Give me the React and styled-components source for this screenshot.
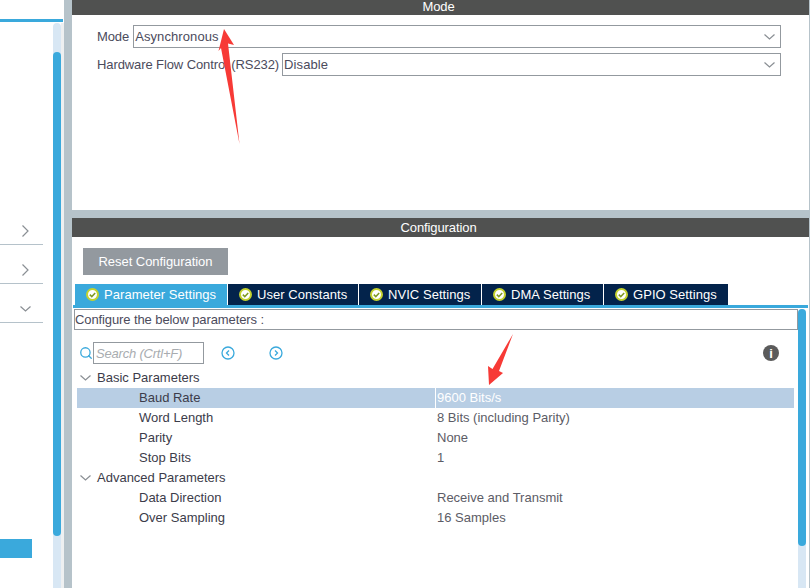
import styled, { createGlobalStyle } from "styled-components";
import { Search } from "lucide-react";

const GlobalStyle = createGlobalStyle`
    html, body {
        margin: 0;
        padding: 0;
        background: #fff;
        overflow: hidden;
    }
    body {
        font-family: "Liberation Sans", Arial, sans-serif;
        font-size: 13px;
        color: #4b4b5c;
    }
`

const Page = styled.div`
    position: relative;
    display: flex;
    width: 810px;
    height: 588px;
    overflow: hidden;
    background: #fff;
`

const Sidebar = styled.aside`
    flex: 0 0 64px;
    display: flex;
    flex-direction: column;
    background: #fff;
`

const SidebarRule = styled.div`
    height: 3px;
    margin: 19px 1px 0 0;
    background: #3aa9dc;
`

const SidebarBody = styled.div`
    flex: 1;
    display: flex;
    padding-top: 1px;
`

const SidebarList = styled.div`
    flex: 0 0 53px;
    display: flex;
    flex-direction: column;
    padding-top: 184px;
`

const SidebarRow = styled.div`
    height: 38px;
    width: 43px;
    margin-bottom: 1px;
    display: flex;
    align-items: center;
    justify-content: center;
    padding: 10px 0 0 7px;
    box-sizing: border-box;
    border-bottom: 1px solid #b5c2ca;
`

const SidebarBlock = styled.div`
    width: 32px;
    height: 19px;
    margin-top: 215px;
    background: #3aa9dc;
`

const SidebarGutter = styled.div`
    flex: 0 0 3px;
    background: #eef0f1;
`

const ScrollTrack = styled.div`
    width: 8px;
    flex: 0 0 8px;
    background: #d8e7f4;
    border-radius: 4px 4px 0 0;
    padding-top: ${p => p.$top}px;
    box-sizing: border-box;
`

const ScrollThumb = styled.div`
    height: ${p => p.$height}px;
    background: #3aa9dc;
    border-radius: 4px;
`

const Splitter = styled.div`
    flex: 0 0 8px;
    background: #b6c3ca;
`

const Main = styled.main`
    flex: 1;
    display: flex;
    flex-direction: column;
    min-width: 0;
    border-right: 1px solid #b6c3ca;
`

const SectionHeader = styled.div`
    height: ${p => p.$height}px;
    padding-right: 4px;
    padding-bottom: ${p => p.$lift || 0}px;
    box-sizing: border-box;
    background: #505150;
    color: #fff;
    display: flex;
    align-items: ${p => p.$align || "center"};
    justify-content: center;
    line-height: 13px;
    letter-spacing: -0.1px;
`

const ModePanel = styled.section`
    flex: 0 0 195px;
    display: flex;
    flex-direction: column;
    gap: 5px;
    padding: 10px 28px 0 25px;
    box-sizing: border-box;
    background: #fff;
`

const ModeRow = styled.div`
    display: flex;
    align-items: center;
    gap: ${p => p.$gap}px;
`

const ModeLabel = styled.label`
    white-space: nowrap;
    letter-spacing: -0.1px;
`

const SelectBox = styled.div`
    flex: 1;
    height: 23px;
    display: flex;
    align-items: center;
    justify-content: space-between;
    padding: 0 5px 0 1px;
    box-sizing: border-box;
    border: 1px solid #93999f;
    letter-spacing: 0.1px;
`

const PanelGap = styled.div`
    flex: 0 0 8px;
    background: #b6c3ca;
`

const ConfigPanel = styled.section`
    flex: 1;
    display: flex;
    flex-direction: column;
    min-height: 0;
`

const ResetButton = styled.button`
    align-self: flex-start;
    width: 145px;
    height: 27px;
    margin: 11px 0 9px 11px;
    padding: 0;
    border: 0;
    background: #93999f;
    color: #fff;
    font: inherit;
    letter-spacing: -0.05px;
`

const TabBar = styled.div`
    display: flex;
    height: 21px;
    padding-left: 3px;
`

const Tab = styled.div`
    width: ${p => p.$width}px;
    display: flex;
    align-items: center;
    gap: 5px;
    padding-left: 11px;
    box-sizing: border-box;
    margin-right: 1px;
    color: #fff;
    background: ${p => (p.$active ? "#3aa9dc" : "#03234b")};
    letter-spacing: 0.05px;
    white-space: nowrap;
`

const TabRule = styled.div`
    height: 3px;
    margin: 0 1px 0 1px;
    background: #3aa9dc;
    border-bottom: 1px solid #fff;
    box-sizing: content-box;
`

const ConfigBody = styled.div`
    flex: 1;
    display: flex;
    min-height: 0;
    padding-right: 3px;
`

const ConfigColumn = styled.div`
    flex: 1;
    min-width: 0;
    padding-left: 2px;
`

const HintBox = styled.div`
    height: 21px;
    display: flex;
    align-items: center;
    box-sizing: border-box;
    border: 1px solid #93999f;
    letter-spacing: -0.1px;
`

const Toolbar = styled.div`
    display: flex;
    align-items: center;
    height: 22px;
    margin: 12px 19px 4px 5px;
    color: #3aa9dc;
`

const SearchField = styled.div`
    width: 111px;
    height: 22px;
    box-sizing: border-box;
    border: 1px solid #93999f;
    display: flex;
    align-items: center;
    padding-left: 2px;
    color: #a8acb0;
    font-style: italic;
    letter-spacing: -0.2px;
`

const NavButton = styled.span`
    display: inline-flex;
    margin-left: ${p => p.$gap}px;
`

const InfoBadge = styled.span`
    margin-left: auto;
    width: 16px;
    height: 16px;
    border-radius: 50%;
    background: #5b5b5b;
    color: #fff;
    display: flex;
    align-items: center;
    justify-content: center;
    font-weight: bold;
    font-size: 13px;
`

const Tree = styled.div`
    display: flex;
    flex-direction: column;
    margin: 0 4px 0 3px;
`

const GroupRow = styled.div`
    height: 20px;
    display: flex;
    align-items: center;
    gap: 6px;
    padding: 0 0 1px 3px;
    box-sizing: border-box;
    color: #3c3c4a;
`

const ParamRow = styled.div`
    height: 20px;
    display: grid;
    grid-template-columns: 358px 1fr;
    align-items: center;
    background: ${p => (p.$selected ? "#b8cee4" : "transparent")};
`

const ParamName = styled.span`
    padding: 0 0 2px 62px;
    color: #3c3c4a;
`

const ParamValue = styled.span`
    height: 100%;
    display: flex;
    align-items: center;
    padding: 0 0 1px 1px;
    box-sizing: border-box;
    color: ${p => (p.$selected ? "#fff" : "#5c5c66")};
    border-left: 1px solid ${p => (p.$selected ? "#fff" : "transparent")};
`

const Annotation = styled.svg`
    position: absolute;
    left: 0;
    top: 0;
    pointer-events: none;
`

const ChevronDownIcon = () => (
    <svg width="11" height="6" viewBox="0 0 11 6" fill="none" stroke="#8a8f94" strokeWidth="1.2">
        <path d="M0.5 0.5L5.5 5L10.5 0.5" />
    </svg>
)

const ChevronRightIcon = () => (
    <svg width="7" height="12" viewBox="0 0 7 12" fill="none" stroke="#8a8f94" strokeWidth="1.2">
        <path d="M0.5 0.5L6 6L0.5 11.5" />
    </svg>
)

const CheckIcon = () => (
    <svg width="13" height="13" viewBox="0 0 13 13">
        <circle cx="6.5" cy="6.5" r="5.5" fill="#fff" stroke="#c4d22e" strokeWidth="2" />
        <path d="M3.8 6.6l2 2 3.4-3.6" fill="none" stroke="#7f9a22" strokeWidth="1.5" />
    </svg>
)

const CircleNav = ({ dir }) => (
    <svg width="14" height="14" viewBox="0 0 14 14" fill="none" stroke="#3aa9dc">
        <circle cx="7" cy="7" r="6" strokeWidth="1.3" />
        <path d={dir === "left" ? "M8 4.5L5.5 7 8 9.5" : "M6 4.5L8.5 7 6 9.5"} strokeWidth="1.3" />
    </svg>
)

const tabs = [
    { label: "Parameter Settings", width: 152, active: true },
    { label: "User Constants", width: 130 },
    { label: "NVIC Settings", width: 122 },
    { label: "DMA Settings", width: 121 },
    { label: "GPIO Settings", width: 124 },
]

const groups = [
    {
        title: "Basic Parameters",
        params: [
            ["Baud Rate", "9600 Bits/s", true],
            ["Word Length", "8 Bits (including Parity)"],
            ["Parity", "None"],
            ["Stop Bits", "1"],
        ],
    },
    {
        title: "Advanced Parameters",
        params: [
            ["Data Direction", "Receive and Transmit"],
            ["Over Sampling", "16 Samples"],
        ],
    },
]

export default function App() {
    return (
        <Page>
            <GlobalStyle />
            <Sidebar>
                <SidebarRule />
                <SidebarBody>
                    <SidebarList>
                        <SidebarRow><ChevronRightIcon /></SidebarRow>
                        <SidebarRow><ChevronRightIcon /></SidebarRow>
                        <SidebarRow><ChevronDownIcon /></SidebarRow>
                        <SidebarBlock />
                    </SidebarList>
                    <ScrollTrack $top={29}>
                        <ScrollThumb $height={484} />
                    </ScrollTrack>
                    <SidebarGutter />
                </SidebarBody>
            </Sidebar>
            <Splitter />
            <Main>
                <SectionHeader $height={15} $align="flex-start">Mode</SectionHeader>
                <ModePanel>
                    <ModeRow $gap={4}>
                        <ModeLabel>Mode</ModeLabel>
                        <SelectBox>
                            <span>Asynchronous</span>
                            <ChevronDownIcon />
                        </SelectBox>
                    </ModeRow>
                    <ModeRow $gap={3}>
                        <ModeLabel>Hardware Flow Control (RS232)</ModeLabel>
                        <SelectBox>
                            <span>Disable</span>
                            <ChevronDownIcon />
                        </SelectBox>
                    </ModeRow>
                </ModePanel>
                <PanelGap />
                <ConfigPanel>
                    <SectionHeader $height={19} $lift={1}>Configuration</SectionHeader>
                    <ResetButton>Reset Configuration</ResetButton>
                    <TabBar>
                        {tabs.map(t => (
                            <Tab key={t.label} $width={t.width} $active={t.active}>
                                <CheckIcon />
                                {t.label}
                            </Tab>
                        ))}
                    </TabBar>
                    <TabRule />
                    <ConfigBody>
                        <ConfigColumn>
                            <HintBox>Configure the below parameters :</HintBox>
                            <Toolbar>
                                <Search size={14} strokeWidth={2.2} />
                                <SearchField>Search (Crtl+F)</SearchField>
                                <NavButton $gap={17}><CircleNav dir="left" /></NavButton>
                                <NavButton $gap={34}><CircleNav dir="right" /></NavButton>
                                <InfoBadge>i</InfoBadge>
                            </Toolbar>
                            <Tree>
                                {groups.map(g => (
                                    <div key={g.title}>
                                        <GroupRow><ChevronDownIcon />{g.title}</GroupRow>
                                        {g.params.map(([name, value, selected]) => (
                                            <ParamRow key={name} $selected={selected}>
                                                <ParamName>{name}</ParamName>
                                                <ParamValue $selected={selected}>{value}</ParamValue>
                                            </ParamRow>
                                        ))}
                                    </div>
                                ))}
                            </Tree>
                        </ConfigColumn>
                        <ScrollTrack $top={0}>
                            <ScrollThumb $height={237} />
                        </ScrollTrack>
                    </ConfigBody>
                </ConfigPanel>
            </Main>
            <Annotation width="810" height="588" viewBox="0 0 810 588">
                <path d="M224 29L234 45 228 43.5 239.5 144 221 48 218.5 51Z" fill="#f73a36" />
                <path d="M513 334L499 371 503 373 489 385 488 366 492.5 369Z" fill="#f73a36" />
            </Annotation>
        </Page>
    )
}
